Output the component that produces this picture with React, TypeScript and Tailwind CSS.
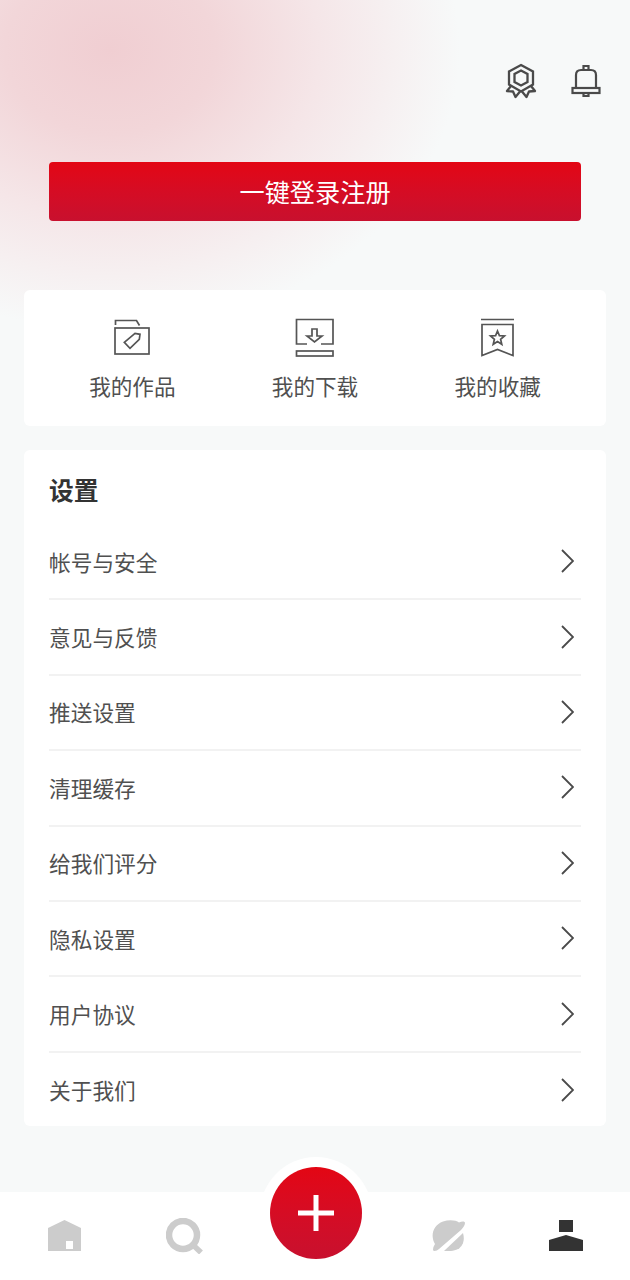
const settings = ["帐号与安全", "意见与反馈", "推送设置", "清理缓存", "给我们评分", "隐私设置", "用户协议", "关于我们"];

function BadgeIcon() {
  return (
    <svg width="32" height="36" viewBox="0 0 32 36" fill="none" stroke="#4a4a4a" strokeWidth="2.3">
      <path d="M16 2 L28 8.5 V21.5 L16 28.5 L4 21.5 V8.5 Z" />
      <path d="M16 7.5 L22.5 11 V19 L16 22.5 L9.5 19 V11 Z" />
      <path d="M6 23 L2 28 L8 28.5 L10.5 34 L15 28.5" strokeLinejoin="round" />
      <path d="M26 23 L30 28 L24 28.5 L21.5 34 L17 28.5" strokeLinejoin="round" />
    </svg>
  );
}

function BellIcon() {
  return (
    <svg width="30" height="34" viewBox="0 0 30 34" fill="none" stroke="#4a4a4a" strokeWidth="2.2">
      <path d="M5 24 V11 Q5 6 10 6 H20 Q25 6 25 11 V24" />
      <rect x="1.5" y="24" width="27" height="5" />
      <path d="M12.5 6 V2 H17.5 V6 M12.5 29 V32 H17.5 V29" />
    </svg>
  );
}

function WorksIcon() {
  return (
    <svg className="mt-px" width="36" height="36" viewBox="0 0 36 36" fill="none" stroke="#555555" strokeWidth="1.7">
      <path d="M1.5 6 V1.5 H22.5 L25.5 6.5" />
      <rect x="1" y="9" width="34" height="26" />
      <path d="M10.3 23.3 L21 14.3 L26 15.3 L25.3 20.3 L16 29.3 Z" />
    </svg>
  );
}

function DownloadIcon() {
  return (
    <svg width="39" height="39" viewBox="0 0 39 39" fill="none" stroke="#555555" strokeWidth="1.7">
      <path d="M12 26 H1.5 V1.5 H38 V26 H26" />
      <path d="M17 11 H22 V18 H27 L19.5 24 L12 18 H17 Z" />
      <rect x="1.5" y="33" width="36.5" height="5" />
    </svg>
  );
}

function StarIcon() {
  return (
    <svg width="35" height="39" viewBox="0 0 35 39" fill="none" stroke="#555555" strokeWidth="1.7">
      <path d="M1 1.5 H34" />
      <path d="M2 6.5 H33 V37.5 L17.5 31.5 L2 37.5 Z" />
      <path d="M17.5 13 L19.4 17.6 L24.5 18 L20.6 21.3 L21.8 26.3 L17.5 23.6 L13.2 26.3 L14.4 21.3 L10.5 18 L15.6 17.6 Z" />
    </svg>
  );
}

function Chevron() {
  return (
    <svg className="mb-px mr-[7px]" width="13" height="24" viewBox="0 0 13 24" fill="none" stroke="#4a4a4a" strokeWidth="1.8">
      <path d="M1 1 L12 12 L1 23" />
    </svg>
  );
}

export default function App() {
  return (
    <div
      className="relative h-[1280px] w-[630px] overflow-hidden bg-[#f7f9f9] text-[#505050]"
      style={{ fontFamily: '"Noto Sans CJK SC", "Noto Sans", sans-serif' }}
    >
      {/* soft pink glow top left */}
      <div className="absolute left-0 top-0 h-[340px] w-[630px] bg-[radial-gradient(ellipse_350px_280px_at_110px_50px,#f0ced2_0%,#f2d6d9_30%,#f5e6e8_60%,#f7f9f9_100%)]" />

      <div className="relative flex h-[1192px] flex-col px-6">
        <div className="flex h-[162px] items-start justify-end gap-[34px] pr-[5px] pt-[63px]">
          <BadgeIcon />
          <div className="pt-px">
            <BellIcon />
          </div>
        </div>

        <button className="mx-[25px] h-[59px] rounded-[4px] bg-gradient-to-b from-[#e30613] to-[#c8102e] text-[25.2px] text-white">
          一键登录注册
        </button>

        <div className="mt-[69px] grid h-[136px] grid-cols-3 rounded-[6px] bg-white px-[17px] pt-[28px]">
          {[
            { label: "我的作品", icon: <WorksIcon /> },
            { label: "我的下载", icon: <DownloadIcon /> },
            { label: "我的收藏", icon: <StarIcon /> },
          ].map((item) => (
            <div key={item.label} className="flex flex-col items-center">
              <div className="flex h-[39px] items-start">{item.icon}</div>
              <span className="mt-[13px] text-[21.6px] leading-[32px]">{item.label}</span>
            </div>
          ))}
        </div>

        <div className="mt-6 h-[676px] rounded-[6px] bg-white px-[25px]">
          <h2 className="h-[75px] pt-[21px] text-[24.8px] font-bold leading-[36px] text-[#333333]">设置</h2>
          {settings.map((name, index) => (
            <div
              key={name}
              className={`flex h-[75.4px] items-center justify-between ${index < settings.length - 1 ? "border-b-2 border-[#f2f2f2]" : ""}`}
            >
              <span className="text-[21.7px] leading-[32px]">{name}</span>
              <Chevron />
            </div>
          ))}
        </div>
      </div>

      {/* bottom nav */}
      <div className="absolute bottom-0 left-0 flex h-[88px] w-full items-start bg-white pt-[28px]">
        <svg className="ml-[48px]" width="33" height="31" viewBox="0 0 33 31" fill="#cccccc">
          <path fillRule="evenodd" d="M0 8 L16.5 0 L33 8 V31 H0 Z M18 21 V29 H25 V21 Z" />
        </svg>
        <svg className="ml-[85px] mt-[-2px]" width="37" height="36" viewBox="0 0 37 36" fill="none" stroke="#cccccc">
          <circle cx="17" cy="17" r="14" strokeWidth="6.5" />
          <path d="M26 26 L35 34.5" strokeWidth="5.5" />
        </svg>
        <svg className="ml-[229px]" width="33" height="31" viewBox="0 0 33 31" fill="#cccccc">
          <path d="M3 24 C-2 16 1 5 11 1.5 C17 -0.5 24 0 27 2.5 C30 1 33 1 33 3 C33 5 31 8 29 10 L7 29 Q5 31 2.5 31 Q1 31 1 29.5 Q1 27 3 24 Z" />
          <path d="M12 31 L31 13 C33 20 31 26 26 29 C22 31 17 31.5 12 31 Z" />
        </svg>
        <svg className="ml-[84px]" width="34" height="31" viewBox="0 0 34 31" fill="#333333">
          <rect x="10" y="0" width="14" height="12" />
          <path d="M0 20 L17 15 L34 20 V31 H0 Z" />
        </svg>
      </div>

      {/* raised add button */}
      <div className="absolute left-[260px] top-[1157px] flex h-[112px] w-[112px] items-center justify-center rounded-full bg-white">
        <div className="flex h-[92px] w-[92px] items-center justify-center rounded-full bg-gradient-to-b from-[#e30613] to-[#c8102e]">
          <svg width="36" height="36" viewBox="0 0 36 36" stroke="#ffffff" strokeWidth="5">
            <path d="M18 0 V36 M0 18 H36" />
          </svg>
        </div>
      </div>
    </div>
  );
}
